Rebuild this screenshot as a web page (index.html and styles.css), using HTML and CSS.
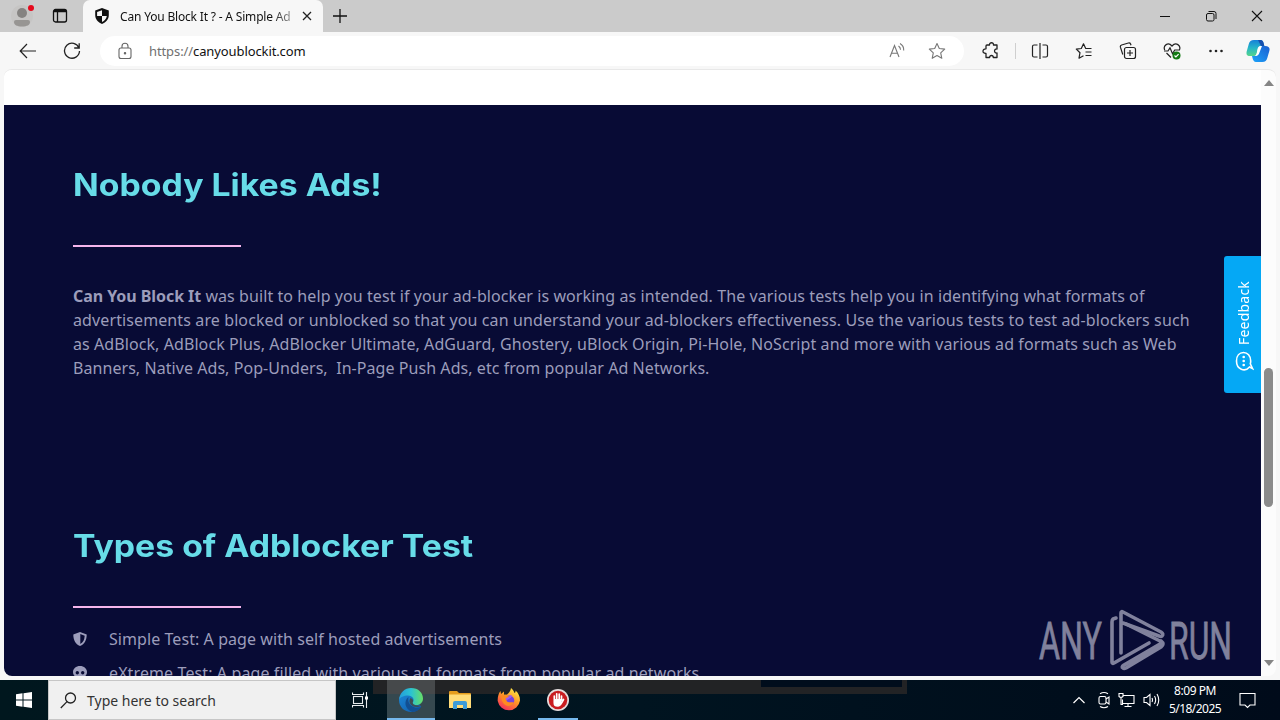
FILE: index.html
```html
<!DOCTYPE html>
<html lang="en">
<head>
    <meta charset="UTF-8">
    <meta name="viewport" content="width=device-width, initial-scale=1.0">
    <title>Can You Block It ? - A Simple Ad Block Tester</title>
    <link rel="stylesheet" href="styles.css">
</head>
<body>
    <!-- Tab strip -->
    <div class="tab-strip">
        <div class="profile">
            <svg width="24" height="26" viewBox="0 0 24 26">
                <circle cx="12" cy="13" r="11" fill="#c6c5c4"/>
                <circle cx="12" cy="10" r="5" fill="#858381"/>
                <path d="M4 19q0-2 2-2h12q2 0 2 2c0 3-3 4.500-8 4.500s-8-1.500-8-4.500z" fill="#979593"/>
                <circle cx="21" cy="5" r="3" fill="#e5091c"/>
            </svg>
        </div>
        <svg class="workspaces" width="16" height="16" viewBox="0 0 16 16" fill="none" stroke="#111" stroke-width="1.300">
            <rect x="1.500" y="1.500" width="13" height="12.500" rx="2"/>
            <path d="M2 3h12" stroke-width="2.500"/>
            <path d="M5.500 4v10"/>
        </svg>
        <div class="tab">
            <svg width="16" height="16" viewBox="0 0 16 16">
                <path d="M8 0l6.800 2.500v4.500c0 4.200-2.800 7.500-6.800 9-4-1.500-6.800-4.800-6.800-9V2.500z" fill="#111"/>
                <path d="M8 2.200V8H3.100V4zM8 8h4.800c-.4 2.700-2.200 4.800-4.800 6z" fill="#f7f7f7"/>
            </svg>
            <span class="tab-title">Can You Block It ? - A Simple Ad</span>
            <svg class="tab-close" width="10" height="10" viewBox="0 0 10 10" stroke="#222" stroke-width="1.300"><path d="M1 1l8 8M9 1L1 9"/></svg>
        </div>
        <svg class="new-tab" width="14" height="14" viewBox="0 0 14 14" stroke="#111" stroke-width="1.300"><path d="M7 0v14M0 7h14"/></svg>
        <div class="window-buttons">
            <svg width="12" height="12" viewBox="0 0 12 12" stroke="#111"><path d="M1 6.500h10"/></svg>
            <svg width="12" height="12" viewBox="0 0 12 12" fill="none" stroke="#111"><rect x="1.500" y="3.500" width="7.500" height="7.500" rx="1.500"/><path d="M3.500 1.500h5.500q2 0 2 2V9"/></svg>
            <svg width="12" height="12" viewBox="0 0 12 12" stroke="#111" stroke-width="1.100"><path d="M1 1l10 10M11 1L1 11"/></svg>
        </div>
    </div>

    <!-- Toolbar -->
    <div class="toolbar">
        <svg class="back" width="18" height="16" viewBox="0 0 18 16" fill="none" stroke="#222" stroke-width="1.200"><path d="M8 1L1.200 8 8 15M1.200 8H17"/></svg>
        <svg class="reload" width="18" height="18" viewBox="0 0 18 18" fill="none" stroke="#222" stroke-width="1.300"><path d="M16 6A7.500 7.500 0 1 0 16.500 9M16.200 1.200V6h-5"/></svg>
        <div class="address-bar">
            <svg width="14" height="18" viewBox="0 0 14 18" fill="none" stroke="#666" stroke-width="1.100"><rect x="1" y="6" width="12" height="10.500" rx="2"/><path d="M4 6V4.200a3 3 0 0 1 6 0V6"/><circle cx="7" cy="11.300" r=".7" fill="#666"/></svg>
            <span class="url"><span class="scheme">https://</span>canyoublockit.com</span>
            <svg class="read-aloud" width="18" height="18" viewBox="0 0 18 18" fill="none" stroke="#777" stroke-width="1.100"><path d="M2 15L6.500 3.500 11 15M3.600 11.200h5.900M10.500 4q2 1.300 2 3.800M12 1.500q4 2.300 3.700 7"/></svg>
            <svg width="18" height="18" viewBox="0 0 18 18" fill="none" stroke="#777" stroke-width="1.100" stroke-linejoin="round"><path d="M9 1.500l2.300 5 5.400.6-4 3.700 1.100 5.500L9 13.600l-4.800 2.700 1.100-5.500-4-3.700 5.400-.6z"/></svg>
        </div>
        <svg class="extensions" width="18" height="18" viewBox="0 0 18 18" fill="none" stroke="#222" stroke-width="1.300" stroke-linejoin="round"><path d="M5 3h2.500c-.2-3 4.300-3 4 0H15v4c-3.300-.5-3.300 4.500 0 4v4.500h-3.700c0-2.700-3.700-2.700-3.700 0H4v-4c-4 .3-4-5 0-4.700V4q0-1 1-1z"/></svg>
        <div class="divider"></div>
        <div class="tools">
            <svg width="18" height="18" viewBox="0 0 18 18" fill="none" stroke="#222" stroke-width="1.200"><path d="M6.500 3H3Q1.500 3 1.500 4.500v9Q1.500 15 3 15h3.500M11.500 3H15q1.500 0 1.500 1.500v9Q16.500 15 15 15h-3.500M9 1v16"/></svg>
            <svg width="18" height="18" viewBox="0 0 18 18" fill="none" stroke="#222" stroke-width="1.200" stroke-linejoin="round"><path d="M16.500 6.500h-5.800L8.500 1.800 6.300 6.500 1.300 7.100l3.700 3.600-1 5.500 4.500-2.500M10.500 10h6M10.500 13.500h6"/></svg>
            <svg width="18" height="18" viewBox="0 0 18 18" fill="none" stroke="#222" stroke-width="1.200"><rect x="5.500" y="5.500" width="11" height="11" rx="2"/><path d="M11 8v6M8 11h6M3.800 12.500L1.400 5.200Q1 3.500 2.600 3l6.800-2q1.600-.4 2.200 1l.4 1.300"/></svg>
            <svg width="18" height="18" viewBox="0 0 18 18" fill="none" stroke="#222" stroke-width="1.200"><path d="M1.700 8C-.2 3.500 5-.5 9 4c4-4.500 9.300-.5 7.400 4M1 9h4l2-3.300 2.500 6L11.700 8H17M3.500 11L8 15.500"/><circle cx="13.500" cy="13.500" r="4" fill="#137a13" stroke="none"/><path d="M11.500 13.500l1.400 1.400 2.700-2.800" stroke="#fff"/></svg>
            <svg width="18" height="18" viewBox="0 0 18 18" fill="#222"><circle cx="3.500" cy="9" r="1.300"/><circle cx="9" cy="9" r="1.300"/><circle cx="14.500" cy="9" r="1.300"/></svg>
        </div>
        <svg class="copilot" width="24" height="24" viewBox="0 0 24 24">
            <defs>
                <linearGradient id="cp-left" x1="0" y1="0" x2="0" y2="1"><stop offset="0" stop-color="#1681d8"/><stop offset=".5" stop-color="#26b6c8"/><stop offset="1" stop-color="#55d58b"/></linearGradient>
                <linearGradient id="cp-right" x1="1" y1="0" x2="0" y2="1"><stop offset="0" stop-color="#1b5ed0"/><stop offset="1" stop-color="#1ca4fa"/></linearGradient>
            </defs>
            <path d="M15 7h4c4 0 5.200 2 4.300 5l-2 7c-.8 2.500-2 4-5 4H10c-2 0-3-2-3.500-4L6 17h3c2 0 2.800-1 3.300-3z" fill="url(#cp-right)"/>
            <path d="M8 1h6.500c2 0 2.700 1.500 3.200 3.500L18.300 7H15c-2 0-2.600 1.500-3 3l-1.300 4.500C10 16.500 9 17 7 17H4C.7 17 0 15 .8 12l2-7C3.500 2.500 5 1 8 1z" fill="url(#cp-left)"/>
            <path d="M14.500 1c2 0 2.700 1.500 3.200 3.500L18.300 7H15L12 1z" fill="#174fae"/>
            <path d="M11.500 10q.7-3 3.500-3h1l-2.700 7q-.8 3-4.300 3 1.200-.5 1.700-2.500z" fill="#fff"/>
        </svg>
    </div>

    <!-- Page -->
    <div class="viewport">
        <div class="page">
            <section class="content">
                <h2>Nobody Likes Ads!</h2>
                <div class="rule"></div>
                <p class="intro">
                    <span class="loose"><strong>Can You Block It</strong> was built to help you test if your ad-blocker is working as intended. The various tests help you in identifying what formats of</span><br>
                    <span class="looser">advertisements are blocked or unblocked so that you can understand your ad-blockers effectiveness. Use the various tests to test ad-blockers such</span><br>
                    <span class="loose">as AdBlock, AdBlock Plus, AdBlocker Ultimate, AdGuard, Ghostery, uBlock Origin, Pi-Hole, NoScript and more with various ad formats such as Web</span><br>
                    <span>Banners, Native Ads, Pop-Unders, &nbsp;In-Page Push Ads, etc from popular Ad Networks.</span>
                </p>
                <h2 class="types">Types of Adblocker Test</h2>
                <div class="rule"></div>
                <ul class="tests">
                    <li>
                        <svg width="14" height="16" viewBox="0 0 14 16"><path d="M7 1l6.700 2.500c0 5.500-2 9.500-6.700 11.500C2.300 13 .3 9 .3 3.500z" fill="#9c9dbb"/><path d="M7.300 3l4.400 1.700c-.2 3.800-1.500 6.600-4.400 8.200z" fill="#080b35"/></svg>
                        <span>Simple Test: A page with self hosted advertisements</span>
                    </li>
                    <li>
                        <svg width="14" height="16" viewBox="0 0 14 16"><path d="M7 1C3 1 0 3.700 0 7c0 2 1 3.700 2.700 4.800V15h8.600v-3.200C13 10.700 14 9 14 7c0-3.300-3-6-7-6z" fill="#9c9dbb"/><circle cx="4.300" cy="7.800" r="1.700" fill="#080b35"/><circle cx="9.700" cy="7.800" r="1.700" fill="#080b35"/></svg>
                        <span class="looser">eXtreme Test: A page filled with various ad formats from popular ad networks</span>
                    </li>
                </ul>
            </section>
        </div>
        <div class="scrollbar">
            <svg width="10" height="6" viewBox="0 0 10 6"><path d="M5 0l5 6H0z" fill="#858585"/></svg>
            <div class="thumb"></div>
            <svg width="10" height="6" viewBox="0 0 10 6"><path d="M5 6L0 0h10z" fill="#858585"/></svg>
        </div>
        <div class="feedback">
            <svg width="20" height="20" viewBox="0 0 20 20" fill="none" stroke="#fff" stroke-width="1.600"><path d="M4 15.500C-1.500 11 1.500 2.500 10 2.500c5.300 0 8.500 3 8.500 7s-3.200 7.200-8.500 7.200c-1 0-2-.1-2.800-.4L2.500 18.500z"/><g fill="#fff" stroke="none"><circle cx="6" cy="9.700" r="1.300"/><circle cx="10" cy="9.700" r="1.300"/><circle cx="14" cy="9.700" r="1.300"/></g></svg>
            <span>Feedback</span>
        </div>
        <svg class="watermark" width="196" height="64" viewBox="0 0 196 64">
            <text x="1" y="50" textLength="63" lengthAdjust="spacingAndGlyphs">ANY</text>
            <text x="131" y="50" textLength="63" lengthAdjust="spacingAndGlyphs">RUN</text>
            <g fill="none" stroke="#80819c" stroke-width="3.600" stroke-linejoin="round" stroke-linecap="round">
                <path d="M83 44V4q0-2 2-1l38 20q3 2 1 4-1 1-3 0L85 14"/>
                <path d="M78 9l-3 1q-1 1-1 3v40q0 2 2 1l35-20"/>
                <path d="M88 15l34 17q3 1 0 3L86 56q-3 2-1 3 1 1 3 0l35-21q4-3 0-6"/>
            </g>
        </svg>
    </div>

    <!-- Taskbar -->
    <div class="taskbar">
        <div class="start">
            <svg width="16" height="16" viewBox="0 0 16 16" fill="#fff"><path d="M0 2.200l6.500-.9v6.200H0zM7.500 1.200L16 0v7.500H7.500zM0 8.500h6.500v6.200L0 13.800zM7.500 8.500H16V16l-8.500-1.200z"/></svg>
        </div>
        <div class="search">
            <svg width="17" height="17" viewBox="0 0 17 17" fill="none" stroke="#222" stroke-width="1.300"><circle cx="10.500" cy="6" r="5"/><path d="M7 9.600L.8 16"/></svg>
            <span>Type here to search</span>
        </div>
        <div class="task-view">
            <svg width="17" height="16" viewBox="0 0 17 16" fill="none" stroke="#e8ecee" stroke-width="1.100"><rect x="1.500" y="4.500" width="9" height="7"/><path d="M.5 .5v2h11v-2M.5 15.500v-2h11v2M14.500 0v16"/><rect x="13" y="4.500" width="3" height="3" fill="#fff" stroke="none"/></svg>
        </div>
        <div class="app active open">
            <svg width="26" height="26" viewBox="0 0 26 26">
                <defs>
                    <linearGradient id="edge-top" x1="0" y1=".4" x2="1" y2=".4"><stop offset="0" stop-color="#249cdb"/><stop offset=".5" stop-color="#2bc3d2"/><stop offset="1" stop-color="#67df66"/></linearGradient>
                    <linearGradient id="edge-bottom" x1="0" y1="0" x2="1" y2="1"><stop offset="0" stop-color="#1b86d6"/><stop offset="1" stop-color="#125ba8"/></linearGradient>
                </defs>
                <path d="M1 13C1.500 8 6 6.500 13 7l10.200 12.500C21 23 17.500 25 13 25 6.500 25 1 20 1 13z" fill="url(#edge-bottom)"/>
                <path d="M1 13C1.500 5.500 7 1 13 1c7.500 0 12 5 12 10.500 0 4-3 6.500-6.500 6.500-4 0-5-1.500-3.500-3 1.800-2.500-.5-6.500-5-6.500-4.300 0-8 1.500-9 4.500z" fill="url(#edge-top)"/>
                <path d="M10.500 10c-5 3.500-4 12.500 4 15 4 0 6.700-2 8.700-5.200-2 1.200-5 1.500-7.500.2-4-1.500-6.200-5-5.200-10z" fill="#124f92"/>
                <path d="M12.500 11c-3 4.500 1 9 6 9 2 0 3.800-.6 5-1.500-4 .5-9-.2-8.800-3.200 1-1.500.5-3.300-2.200-4.300z" fill="#3e4c53"/>
            </svg>
        </div>
        <div class="app">
            <svg width="22" height="20" viewBox="0 0 22 20"><path d="M0 2q0-1 1-1h7l2 2h11q1 0 1 1v4H0z" fill="#e59d1d"/><path d="M0 4.500h22V18H0z" fill="#ffdc78"/><path d="M4 19v-6q0-2 2-2h10q2 0 2 2v6h-4v-4H8v4z" fill="#3b9bd9"/></svg>
        </div>
        <div class="app">
            <svg width="24" height="24" viewBox="0 0 24 24">
                <defs><linearGradient id="fox" x1=".8" y1="0" x2=".2" y2="1"><stop offset="0" stop-color="#fff14a"/><stop offset=".45" stop-color="#ff9826"/><stop offset="1" stop-color="#f5265f"/></linearGradient></defs>
                <path d="M14 0c2 1.500 3 3.500 3.500 5 1-.5 1.200-1.500 1-2.500 3 2.500 4.500 6 4.500 10A11.300 11.300 0 0 1 .7 13C.5 9 1.500 5.500 3.500 3l.5 3 3-2.500v3h3C12 5 13.500 3 14 0z" fill="url(#fox)"/>
                <circle cx="12.300" cy="12.500" r="5" fill="#7643db"/>
                <path d="M4 8c3-2 6 0 8.500.5L11 11c-2 0-2 2 0 3 2.500 1 4-.5 6 .5-2 4-7 4.500-10 1.500C5 14 4.500 11 4 8z" fill="#ff8b20"/>
                <path d="M9 11.500c2-1.500 4.500-2 5.500-4" fill="none" stroke="#9c5cf0" stroke-width="2"/>
            </svg>
        </div>
        <div class="app open">
            <svg width="24" height="24" viewBox="0 0 24 24"><circle cx="12" cy="12" r="11" fill="#e4dddd"/><circle cx="12" cy="12" r="9.300" fill="#c91c20"/><path d="M8.300 12V8M10.700 11V5.800M13.200 11V6M15.500 12V8M8.300 12v3q0 3 3.500 3c2 0 3-1.500 3.700-3l2-3.500" fill="none" stroke="#fff" stroke-width="1.700" stroke-linecap="round"/><path d="M8 11h8l-1 5-3 2-4-2z" fill="#fff"/></svg>
        </div>
        <div class="tray">
            <svg width="12" height="8" viewBox="0 0 12 8" fill="none" stroke="#fff" stroke-width="1.200"><path d="M.5 7L6 1.500 11.500 7"/></svg>
            <svg class="meet" width="12" height="18" viewBox="0 0 12 18" fill="none" stroke="#fff" stroke-width="1.100"><rect x="1" y="5.500" width="7" height="7.500" rx="1.500"/><path d="M8 8l3-2v7l-3-2M2 2.700Q6 .3 10 2.700M2 15.500q4 2.400 8 0"/></svg>
            <svg width="17" height="16" viewBox="0 0 17 16" fill="none" stroke="#fff" stroke-width="1.100"><path d="M5 3.500h11v8H4.500v-4M10 11.500v3M6.500 14.500h7M1 1.500h4v3q-2 2-4 0zM3 5.500v7h2"/></svg>
            <svg width="17" height="14" viewBox="0 0 17 14" fill="none" stroke="#fff" stroke-width="1.100"><path d="M1 4.500h2.500L7 1.500v11L3.500 9.500H1zM9 5q1 2 0 4M11.500 3q2.300 4 0 8M14 1q3.500 6 0 12"/></svg>
        </div>
        <div class="clock"><span class="time">8:09 PM</span><span>5/18/2025</span></div>
        <svg class="notifications" width="17" height="17" viewBox="0 0 17 17" fill="none" stroke="#fff" stroke-width="1.100"><path d="M1 1.500h15v11.500h-5l-2.500 2.500L6 13H1z"/></svg>
        <div class="ghost-window"><div class="ghost-inner"></div></div>
    </div>
</body>
</html>
```
FILE: styles.css
```css
* {
    box-sizing: border-box;
}

body {
    margin: 0;
    width: 1280px;
    height: 720px;
    display: flex;
    flex-direction: column;
    overflow: hidden;
    background: #f7f7f7;
    font-family: "Noto Sans", sans-serif;
}

svg {
    display: block;
    flex: none;
}

/* Tab strip */
.tab-strip {
    height: 32px;
    flex: none;
    display: flex;
    align-items: center;
    background: #cbcbcb;
}

.profile {
    padding-left: 10px;
    width: 52px;
}

.workspaces {
    margin-right: 15px;
}

.tab {
    width: 240px;
    height: 32px;
    display: flex;
    align-items: center;
    padding: 0 11px;
    background: #f7f7f7;
    border-radius: 7px 7px 0 0;
}

.tab-title {
    width: 171px;
    margin: 0 12px 0 10px;
    overflow: hidden;
    white-space: nowrap;
    font-size: 12px;
    letter-spacing: -0.18px;
    color: #111;
    -webkit-mask-image: linear-gradient(to right, #000 152px, rgba(0, 0, 0, 0.4) 171px);
}

.new-tab {
    margin-left: 10px;
}

.window-buttons {
    margin-left: auto;
    margin-right: 17px;
    display: flex;
    gap: 34px;
}

/* Toolbar */
.toolbar {
    height: 37px;
    flex: none;
    display: flex;
    align-items: center;
    background: #f7f7f7;
}

.back {
    margin-left: 19px;
}

.reload {
    margin-left: 26px;
}

.address-bar {
    width: 864px;
    height: 30px;
    margin-left: 19px;
    padding: 0 18px 0 18px;
    display: flex;
    align-items: center;
    background: #fff;
    border-radius: 15px;
}

.url {
    margin-left: 17px;
    font-size: 13px;
    letter-spacing: -0.1px;
    color: #111;
}

.scheme {
    color: #707070;
}

.read-aloud {
    margin-left: auto;
    margin-right: 22px;
}

.extensions {
    margin-left: 18px;
}

.divider {
    width: 1px;
    height: 16px;
    margin: 0 15px;
    background: #cfcfcf;
}

.tools {
    display: flex;
    gap: 26px;
}

.copilot {
    margin-left: 21px;
}

/* Page */
.viewport {
    position: relative;
    height: 607px;
    flex: none;
    margin: 0 4px;
    display: flex;
    overflow: hidden;
    background: #fcfcfc;
    border-top: 1px solid #e8e8e8;
    border-radius: 8px;
}

.page {
    width: 1257px;
    padding-top: 35px;
    background: #fff;
}

.content {
    height: 571px;
    padding: 60px 69px 0;
    overflow: hidden;
    background: #080b35;
    color: #9c9dbb;
}

h2 {
    width: max-content;
    height: 40px;
    margin: 0;
    font-family: Inter, sans-serif;
    font-size: 31px;
    line-height: 40px;
    font-weight: 700;
    white-space: nowrap;
    color: #67dce8;
    transform: scaleX(1.09);
    transform-origin: left;
}

.types {
    margin-top: 146px;
}

.rule {
    width: 168px;
    height: 2px;
    margin-top: 40px;
    background: #f5b5ec;
}

.intro {
    margin: 37px 0 0;
    font-size: 16px;
    line-height: 24px;
    letter-spacing: 0.06px;
    white-space: nowrap;
}

.intro strong {
    letter-spacing: -0.06px;
}

.loose {
    letter-spacing: 0.08px;
}

.looser {
    letter-spacing: 0.11px;
}

.tests {
    margin: 14px 0 0;
    padding: 0;
    list-style: none;
}

.tests li {
    height: 34px;
    display: flex;
    align-items: center;
    gap: 22px;
    font-size: 16px;
    letter-spacing: 0.07px;
    white-space: nowrap;
}

.scrollbar {
    width: 15px;
    display: flex;
    flex-direction: column;
    align-items: center;
    padding: 10px 0;
}

.thumb {
    width: 9px;
    height: 139px;
    margin: 282px 0 auto;
    border-radius: 5px;
    background: #8b8b8b;
}

.feedback {
    position: absolute;
    top: 186px;
    left: 1220px;
    width: 37px;
    height: 137px;
    padding: 3px 0 0 2px;
    display: flex;
    flex-direction: column-reverse;
    align-items: center;
    justify-content: center;
    gap: 7px;
    border-radius: 3px 0 0 3px;
    background: #05a8f5;
    color: #fff;
}

.feedback svg {
    transform: rotate(-90deg);
}

.feedback span {
    writing-mode: vertical-rl;
    transform: rotate(180deg);
    font-size: 14px;
    letter-spacing: 0.2px;
}

.watermark {
    position: absolute;
    top: 539px;
    left: 1034px;
    font-family: Roboto, sans-serif;
    font-size: 52px;
    fill: #80819c;
    stroke: #80819c;
    stroke-width: 0.8px;
}

/* Taskbar */
.taskbar {
    position: relative;
    height: 40px;
    flex: none;
    margin-top: 4px;
    display: flex;
    align-items: center;
    background: linear-gradient(to right, #00171e, #001420 50%, #000b1a);
}

.start {
    width: 48px;
    display: flex;
    justify-content: center;
}

.search {
    width: 288px;
    height: 40px;
    padding-left: 11px;
    display: flex;
    align-items: center;
    gap: 10px;
    border: 1px solid #c6c6c6;
    background: #f0f0f0;
    font-size: 14px;
    color: #333;
}

.task-view {
    width: 51px;
    padding-left: 16px;
}

.app {
    width: 48px;
    height: 40px;
    margin-right: 1px;
    display: flex;
    align-items: center;
    justify-content: center;
    position: relative;
    z-index: 1;
}

.active {
    background: linear-gradient(#46494b 14px, #35484f 14px);
}

.open::after {
    content: "";
    position: absolute;
    left: 4px;
    right: 4px;
    bottom: 0;
    height: 2px;
    background: #76b9ed;
}

.active::after {
    left: 0;
    right: 0;
}

.tray {
    margin-left: auto;
    display: flex;
    align-items: center;
    gap: 8px;
}

.meet {
    margin-left: 5px;
}

.clock {
    width: 56px;
    margin-left: 7px;
    display: flex;
    flex-direction: column;
    align-items: center;
    font-size: 12px;
    line-height: 18px;
    letter-spacing: -0.55px;
    color: #fff;
}

.time {
    letter-spacing: -0.45px;
}

.notifications {
    margin-left: 16px;
    margin-right: 24px;
}

.ghost-window {
    position: absolute;
    top: 0;
    left: 373px;
    width: 534px;
    height: 14px;
    background: #222325;
}

.ghost-inner {
    width: 141px;
    height: 7px;
    margin-left: 388px;
    background: #000d1c;
}
```
